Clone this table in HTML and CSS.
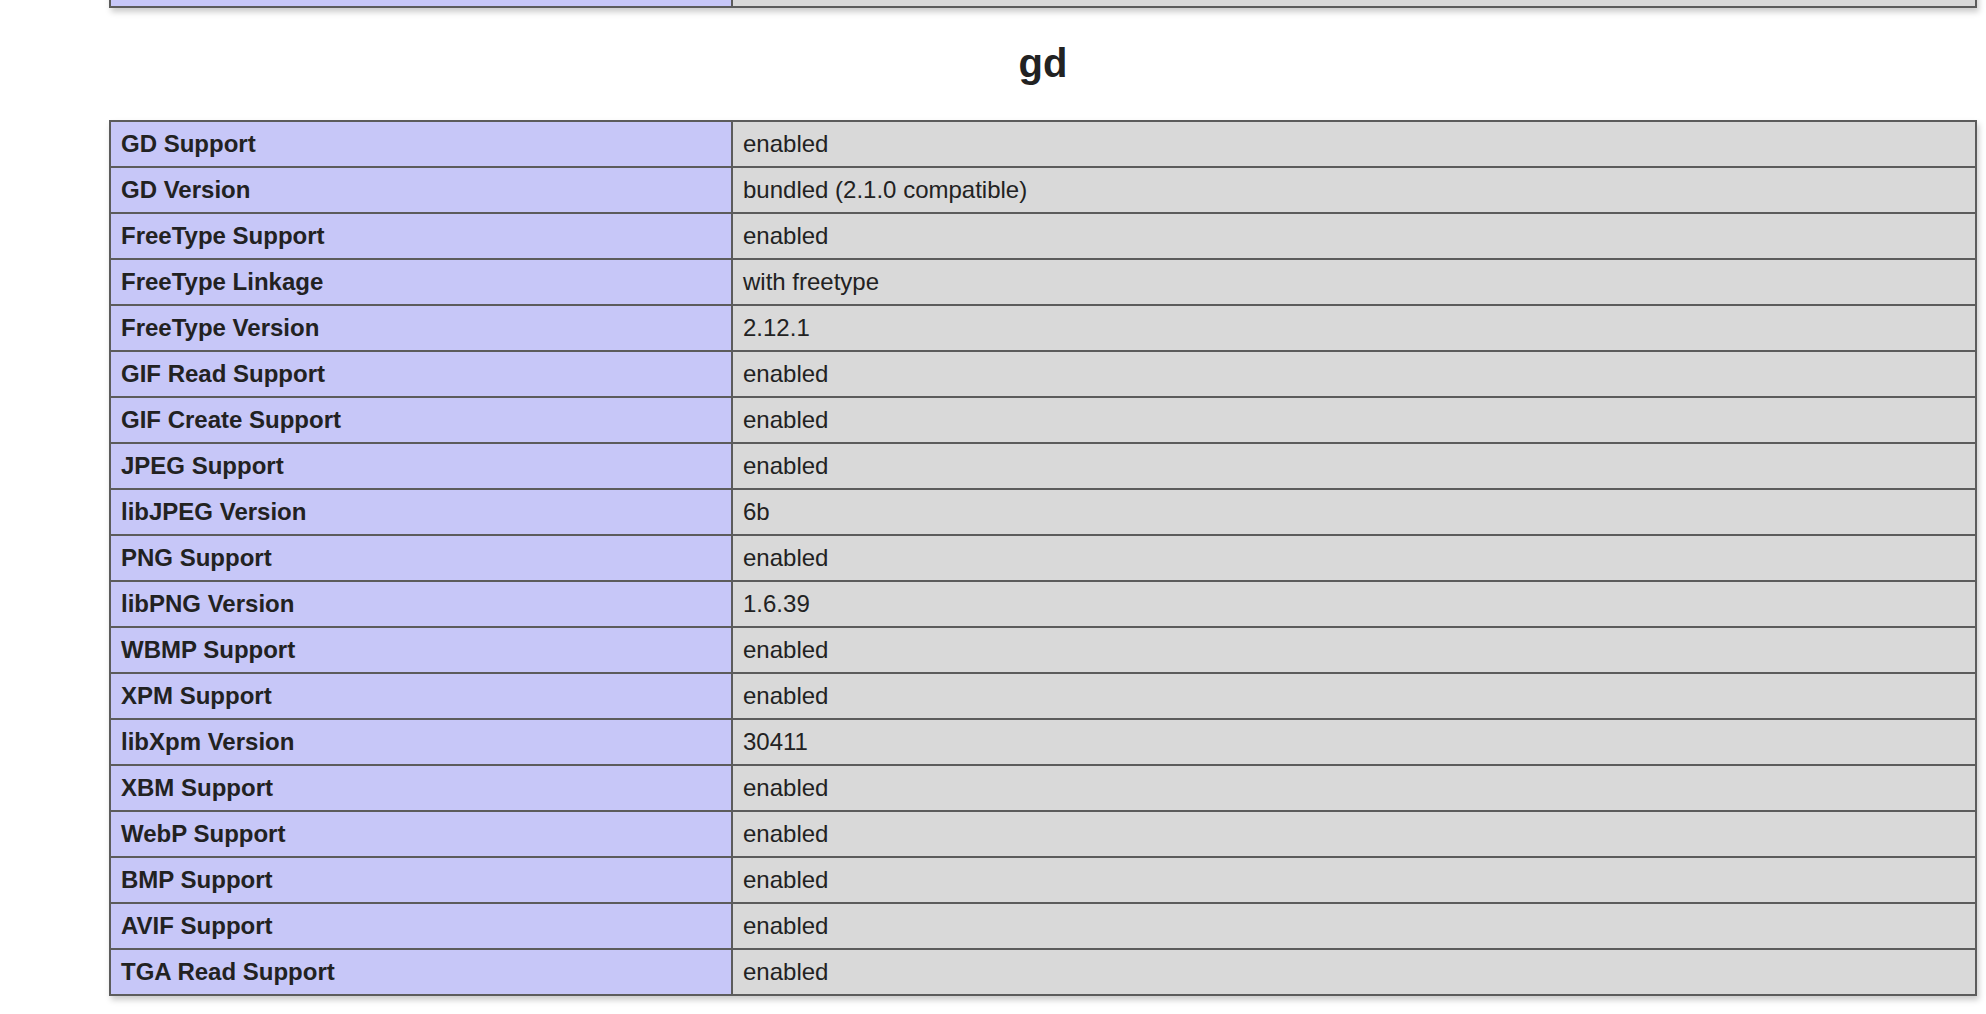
FILE: index.html
```html
<!DOCTYPE html>
<html>
<head>
<meta charset="utf-8">
<title>phpinfo</title>
<link rel="stylesheet" href="styles.css">
</head>
<body>
<div class="center">
<table class="prev">
<tr><td class="e">&nbsp;</td><td class="v">&nbsp;</td></tr>
</table>
<h2>gd</h2>
<table>
<tr><td class="e">GD Support </td><td class="v">enabled </td></tr>
<tr><td class="e">GD Version </td><td class="v">bundled (2.1.0 compatible) </td></tr>
<tr><td class="e">FreeType Support </td><td class="v">enabled </td></tr>
<tr><td class="e">FreeType Linkage </td><td class="v">with freetype </td></tr>
<tr><td class="e">FreeType Version </td><td class="v">2.12.1 </td></tr>
<tr><td class="e">GIF Read Support </td><td class="v">enabled </td></tr>
<tr><td class="e">GIF Create Support </td><td class="v">enabled </td></tr>
<tr><td class="e">JPEG Support </td><td class="v">enabled </td></tr>
<tr><td class="e">libJPEG Version </td><td class="v">6b </td></tr>
<tr><td class="e">PNG Support </td><td class="v">enabled </td></tr>
<tr><td class="e">libPNG Version </td><td class="v">1.6.39 </td></tr>
<tr><td class="e">WBMP Support </td><td class="v">enabled </td></tr>
<tr><td class="e">XPM Support </td><td class="v">enabled </td></tr>
<tr><td class="e">libXpm Version </td><td class="v">30411 </td></tr>
<tr><td class="e">XBM Support </td><td class="v">enabled </td></tr>
<tr><td class="e">WebP Support </td><td class="v">enabled </td></tr>
<tr><td class="e">BMP Support </td><td class="v">enabled </td></tr>
<tr><td class="e">AVIF Support </td><td class="v">enabled </td></tr>
<tr><td class="e">TGA Read Support </td><td class="v">enabled </td></tr>
</table>
</div>
</body>
</html>
```
FILE: styles.css
```css
html, body {
  margin: 0;
  padding: 0;
  background: #fff;
  color: #222;
  font-family: "Liberation Sans", Arial, Helvetica, sans-serif;
  font-size: 32px;
}
.center {
  width: 1868px;
  margin-left: 109px;
  padding-bottom: 10px;
}
table {
  border-collapse: collapse;
  border: 0;
  width: 1868px;
  box-shadow: 2px 4px 6px #ccc;
  margin: 32px 0;
  text-align: left;
}
table.prev {
  margin-top: -40px;
}
td {
  border: 2px solid #5c5c5c;
  font-size: 24px;
  vertical-align: baseline;
  padding: 8px 10px;
  line-height: 28px;
}
.e {
  background-color: #c7c7f8;
  width: 600px;
  font-weight: bold;
}
.v {
  background-color: #d9d9d9;
}
h2 {
  font-size: 40px;
  font-weight: bold;
  text-align: center;
  margin: 33px 0 34px;
  line-height: normal;
}
```
